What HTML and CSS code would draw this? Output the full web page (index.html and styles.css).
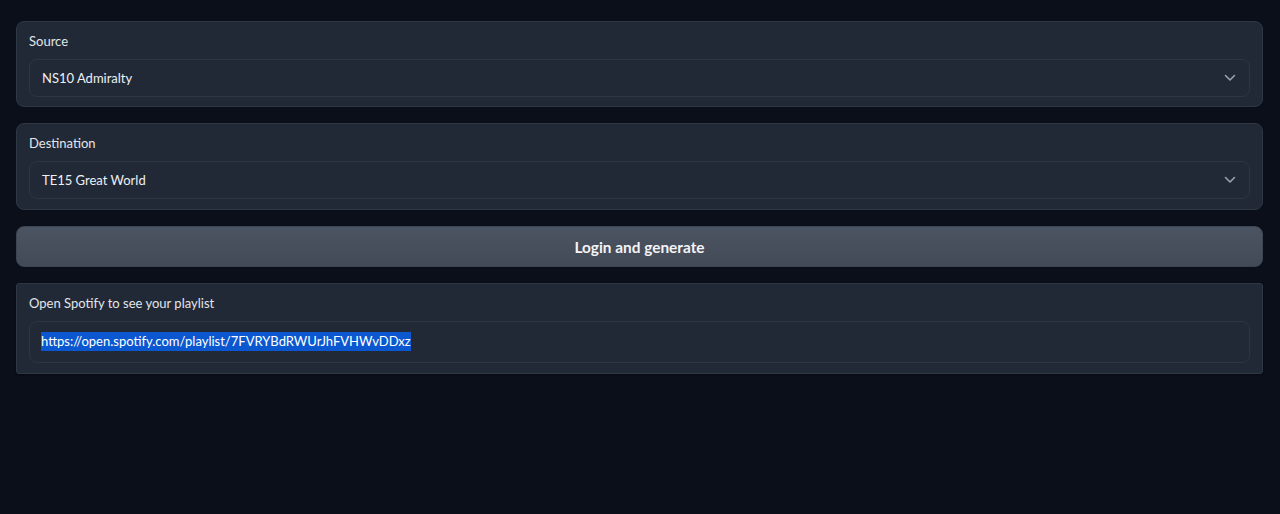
FILE: index.html
```html
<!DOCTYPE html>
<html lang="en">
<head>
<meta charset="utf-8">
<title>Playlist</title>
<link rel="stylesheet" href="styles.css">
</head>
<body>
<main class="app">
  <section class="block">
    <label class="label">Source</label>
    <div class="select">
      <span class="value">NS10 Admiralty</span>
      <svg class="chev" width="12" height="8" viewBox="0 0 12 8"><path d="M1.5 1.5 L6 6 L10.5 1.5" fill="none" stroke="currentColor" stroke-width="1.6" stroke-linecap="round" stroke-linejoin="round"/></svg>
    </div>
  </section>
  <section class="block block-dest">
    <label class="label">Destination</label>
    <div class="select">
      <span class="value">TE15 Great World</span>
      <svg class="chev" width="12" height="8" viewBox="0 0 12 8"><path d="M1.5 1.5 L6 6 L10.5 1.5" fill="none" stroke="currentColor" stroke-width="1.6" stroke-linecap="round" stroke-linejoin="round"/></svg>
    </div>
  </section>
  <button class="btn">Login and generate</button>
  <section class="block block-out">
    <label class="label">Open Spotify to see your playlist</label>
    <div class="textbox"><span class="sel">https://open.spotify.com/playlist/7FVRYBdRWUrJhFVHWvDDxz</span></div>
  </section>
</main>
</body>
</html>
```

FILE: styles.css
```css
html, body {
  margin: 0;
  background: #0b0f19;
  height: 100%;
}
body {
  font-family: "Lato", "Noto Sans", sans-serif;
  color: #e5e7eb;
}
.app {
  display: flex;
  flex-direction: column;
  gap: 16px;
  padding: 21px 17px 0 16px;
}
.block {
  background: #212937;
  border: 1px solid #2f3745;
  border-radius: 8px;
  padding: 10px 12px 9px;
  display: flex;
  flex-direction: column;
  gap: 8px;
}
.block-dest {
  padding-bottom: 10px;
}
.block-out {
  border-radius: 3px;
  padding-bottom: 10px;
  box-shadow: 0 1px 2px rgba(0,0,0,0.3);
}
.label {
  font-size: 13px;
  line-height: 19px;
  color: #e2e5ea;
}
.select {
  height: 38px;
  box-sizing: border-box;
  border: 1px solid #2e3644;
  border-radius: 8px;
  background: #212937;
  display: flex;
  align-items: center;
  justify-content: space-between;
  padding: 0 13px 1px 12px;
}
.value {
  font-size: 13px;
  color: #eef0f3;
}
.chev {
  color: #9aa1ad;
}
.btn {
  height: 41px;
  border: 1px solid #3d4552;
  border-radius: 8px;
  background: linear-gradient(180deg, #4b5462 0%, #434a57 100%);
  color: #f3f4f6;
  font-family: "Lato", "Noto Sans", sans-serif;
  font-weight: 700;
  font-size: 15.4px;
  padding: 0;
}
.textbox {
  height: 42px;
  box-sizing: border-box;
  border: 1px solid #2e3644;
  border-radius: 8px;
  background: #212937;
  display: flex;
  align-items: center;
  padding: 0 11px 1px;
  font-size: 13px;
  color: #ffffff;
}
.sel {
  background: #0b57d0;
  line-height: 19px;
}
```
